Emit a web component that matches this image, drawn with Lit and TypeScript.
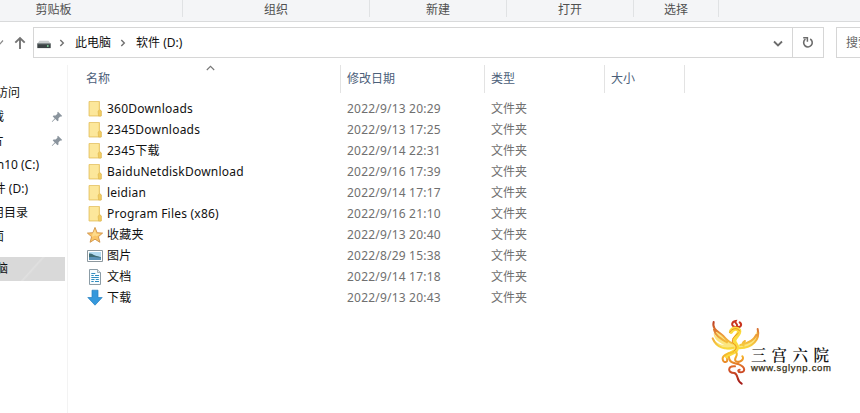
import { LitElement, html, css, svg, nothing } from "lit";
import { customElement } from "lit/decorators.js";
import { styleMap } from "lit/directives/style-map.js";

const icons = {
  folder: svg`<svg width="16" height="18" viewBox="0 0 16 18"><path d="M2 1.5h10.5v8l1.5 1V16H2z" fill="#fbe08a" stroke="#e3c265" stroke-width=".8"/><path d="M3 2h8v13H3z" fill="#fce79b"/><path d="M11 11.2 12.6 9.8 14.3 11v5H11.6z" fill="#f2cd63" stroke="#dcb650" stroke-width=".6"/></svg>`,
  star: svg`<svg width="16" height="18" viewBox="0 0 16 18"><path d="M8 1.4 10.1 6.7 15.6 7.1 11.4 10.7 12.9 16.3 8 13.2 3.1 16.3 4.6 10.7.4 7.1 5.9 6.7z" fill="#fbc566" stroke="#cf9348" stroke-width=".9"/><path d="M8 3.5 9.2 7.7 13 8 9.8 10.3 8 9.5 5 11 5.5 8z" fill="#fddb8c"/></svg>`,
  picture: svg`<svg width="16" height="18" viewBox="0 0 16 18"><path d="M.5 3.5h15v11H.5z" fill="#fff" stroke="#8d989e"/><path d="M2 5h12v8H2z" fill="#b5dcf1"/><path d="M2 6.6c3-.5 4 1.2 6 2s4 .8 6 1.6V12H2z" fill="#3f6c74"/><path d="M2 10.2c3-.6 8 0 12 .4V13H2z" fill="#5b93b8"/></svg>`,
  doc: svg`<svg width="16" height="18" viewBox="0 0 16 18"><path d="M2.5 1.5h8l3 3v12h-11z" fill="#f8fcfe" stroke="#8b9ca6"/><path d="M10.5 1.5v3h3" fill="#dce7ed" stroke="#8b9ca6" stroke-width=".8"/><path d="M4.3 5.5h4M4.3 7.5h2.4M8 7.5h4M4.3 9.5h7.5M4.3 11.5h3.2M8.8 11.5h3M4.3 13.5h2.4M8 13.5h4" stroke="#2f8cc0" stroke-width="1.2"/></svg>`,
  down: svg`<svg width="16" height="18" viewBox="0 0 16 18"><path d="M5 1.2h6v7.3h4.2L8 16.2.8 8.5H5z" fill="#3598dc" stroke="#2580c0" stroke-width=".7"/></svg>`,
};

type IconName = keyof typeof icons;

const files: [IconName, string, string][] = [
  ["folder", "360Downloads", "2022/9/13 20:29"],
  ["folder", "2345Downloads", "2022/9/13 17:25"],
  ["folder", "2345下载", "2022/9/14 22:31"],
  ["folder", "BaiduNetdiskDownload", "2022/9/16 17:39"],
  ["folder", "leidian", "2022/9/14 17:17"],
  ["folder", "Program Files (x86)", "2022/9/16 21:10"],
  ["star", "收藏夹", "2022/9/13 20:40"],
  ["picture", "图片", "2022/8/29 15:38"],
  ["doc", "文档", "2022/9/14 17:18"],
  ["down", "下载", "2022/9/13 20:43"],
];

// label, right edge of the label, pinned
const places: [string, number, boolean][] = [
  ["快速访问", 20, false],
  ["下载", 4, true],
  ["图片", 4, true],
  ["Win10 (C:)", 39, false],
  ["软件 (D:)", 28, false],
  ["常用目录", 28, false],
  ["桌面", 4, false],
];

const pin = svg`<svg class="pin" width="12" height="12" viewBox="0 0 12 12"><path d="M7 .8 11.2 5 10 5.7 9.2 5.5 7.4 7.4 7.5 9.4 6.5 10.2 4.3 8 1.2 11 .8 10.6 3.7 7.4 1.7 5.3 2.6 4.4 4.6 4.5 6.5 2.7 6.2 1.8z" fill="#8a949d"/></svg>`;
const chevron = svg`<svg width="6" height="8" viewBox="0 0 6 8"><path d="M1.3 1 4.3 4 1.3 7" fill="none" stroke="#707070" stroke-width="1.4"/></svg>`;

@customElement("app-root")
export class AppRoot extends LitElement {
  static styles = css`
    :host {
      display: flex;
      flex-direction: column;
      position: relative;
      width: 860px;
      height: 413px;
      overflow: hidden;
      background: #fff;
      color: #111;
      font: 12px/20px "Noto Sans", "Noto Sans CJK SC", sans-serif;
      white-space: nowrap;
    }
    svg { display: block; flex: none; }
    .ribbon {
      display: flex;
      flex: none;
      height: 21px;
      background: #f4f5f7;
      border-bottom: 1px solid #d9dadb;
      color: #505050;
    }
    .group {
      box-sizing: border-box;
      height: 17px;
      line-height: 19px;
      text-align: center;
      border-right: 1px solid #e0e2e4;
    }
    .g1 { width: 258px; margin-left: -75px; }
    .g2 { width: 187px; }
    .g3 { width: 137px; }
    .g4 { width: 127px; }
    .g5 { width: 85px; }
    .bar { display: flex; flex: none; height: 31px; margin-top: 5px; }
    .nav { display: flex; flex: none; width: 33px; align-items: center; }
    .nav .up { margin-left: 8px; }
    .box {
      box-sizing: border-box;
      display: flex;
      flex: none;
      align-items: center;
      border: 1px solid #d6d6d6;
    }
    .address { width: 760px; padding-left: 3px; }
    .address .disk { margin-right: 8px; margin-top: 4px; }
    .address .crumb { margin: 0 9px 0 10px; line-height: 28px; }
    .address .more { margin: 2px 9px 0 auto; }
    .refresh { width: 31px; border-left: 0; justify-content: center; }
    .search { width: 40px; margin-left: 12px; padding-left: 9px; color: #666; overflow: hidden; }
    .main { display: flex; flex: 1; min-height: 0; }
    .side {
      box-sizing: border-box;
      width: 68px;
      margin-top: 7px;
      padding-top: 16px;
      border-right: 1px solid #f3f3f3;
    }
    .place { display: flex; height: 24px; align-items: center; }
    .label { display: flex; flex: none; justify-content: flex-end; }
    .pin { margin-left: 47px; }
    .current { margin-top: 8px; width: 65px; background: linear-gradient(132deg, #d9d9d9 48%, #e0e0e0 50%, #d9d9d9 53%); }
    .list { flex: 1; }
    .head, .row { display: grid; grid-template-columns: 273px 144px 120px 80px; }
    .head {
      position: relative;
      height: 28px;
      margin-top: 7px;
      color: #4c607a;
      line-height: 28px;
    }
    .head span { border-right: 1px solid #e3e3e3; padding-left: 6px; }
    .head .first { padding-left: 18px; }
    .sort { position: absolute; left: 138px; top: 0; }
    .rows { margin-top: 5px; }
    .row { height: 21px; line-height: 21px; color: #707070; }
    .row > span { padding-left: 6px; }
    .row .name { display: flex; align-items: center; gap: 4px; padding-left: 19px; color: #111; }
    .name b { font-weight: 400; letter-spacing: 0.22px; }
    .date { letter-spacing: 0.2px; }
    .logo { position: absolute; left: 708px; top: 315px; }
    .brand { font: 600 15.5px "Noto Serif CJK SC", "Noto Sans CJK SC", serif; }
    .site { font: 9.5px "Liberation Sans", sans-serif; }
  `;

  render() {
    return html`
      <div class="ribbon">
        ${["剪贴板", "组织", "新建", "打开", "选择"].map(
          (t, i) => html`<div class="group g${i + 1}">${t}</div>`
        )}
      </div>
      <div class="bar">
        <div class="nav">
          <svg width="5" height="8" viewBox="0 0 5 8"><path d="M-3 1.5 0 4.8 3 1.5" fill="none" stroke="#888" stroke-width="1.2"/></svg>
          <svg class="up" width="14" height="14" viewBox="0 0 14 14"><path d="M7 13V2M2.3 6.6 7 2l4.7 4.6" fill="none" stroke="#747474" stroke-width="1.9"/></svg>
        </div>
        <div class="box address">
          <svg class="disk" width="14" height="9" viewBox="0 0 14 9"><path d="M2.5.7h9L14 4H0z" fill="#c9cccd"/><path d="M.3 3.8h13.4v4.3H.3z" fill="#3b4244"/><path d="M.3 3.8h13.4" stroke="#777f80"/><circle cx="10.8" cy="6" r=".9" fill="#7fd49b"/></svg>
          ${chevron}<span class="crumb">此电脑</span>${chevron}<span class="crumb">软件 (D:)</span>
          <svg class="more" width="10" height="8" viewBox="0 0 10 8"><path d="M1 1.5 5 5.5 9 1.5" fill="none" stroke="#6c6c6c" stroke-width="1.8"/></svg>
        </div>
        <div class="box refresh">
          <svg width="12" height="13" viewBox="0 0 12 13"><path d="M8.2 3A4.3 4.3 0 1 1 3.4 3.2" fill="none" stroke="#6c6c6c" stroke-width="1.6"/><path d="M1.2 1.8h4.2v4" fill="none" stroke="#6c6c6c" stroke-width="1.5"/></svg>
        </div>
        <div class="box search">搜索</div>
      </div>
      <div class="main">
        <div class="side">
          ${places.map(
            ([t, w, p]) => html`<div class="place">
              <span class="label" style=${styleMap({ width: `${w}px` })}>${t}</span>${p ? pin : nothing}
            </div>`
          )}
          <div class="place current"><span class="label" style=${styleMap({ width: "8px" })}>此电脑</span></div>
        </div>
        <div class="list">
          <div class="head">
            <span class="first">名称</span><span>修改日期</span><span>类型</span><span>大小</span>
            <svg class="sort" width="9" height="6" viewBox="0 0 9 6"><path d="M.8 5 4.5 1.3 8.2 5" fill="none" stroke="#777" stroke-width="1.1"/></svg>
          </div>
          <div class="rows">
            ${files.map(
              ([icon, name, date]) => html`<div class="row">
                <span class="name">${icons[icon]}<b>${name}</b></span><span class="date">${date}</span><span>文件夹</span>
              </div>`
            )}
          </div>
        </div>
      </div>
      <svg class="logo" width="130" height="72" viewBox="0 0 130 72">
        <defs>
          <linearGradient id="wing" gradientUnits="userSpaceOnUse" x1="0" y1="22" x2="0" y2="110">
            <stop offset="0" stop-color="#b8321f"/><stop offset=".5" stop-color="#ec9a3a"/><stop offset="1" stop-color="#fbdf3c"/>
          </linearGradient>
          <linearGradient id="tail" gradientUnits="userSpaceOnUse" x1="0" y1="105" x2="0" y2="208">
            <stop offset="0" stop-color="#fbd92e"/><stop offset=".3" stop-color="#f2a62a"/><stop offset=".6" stop-color="#d85a2a"/><stop offset="1" stop-color="#a51c18"/>
          </linearGradient>
        </defs>
        <g transform="translate(-3 -2) scale(.3333)" fill="none" stroke-linecap="round">
          <path d="M26 27C22 50 44 56 56 70C66 80 74 90 90 92L88 108C72 114 38 108 24 76C34 90 46 96 58 96C40 88 26 78 26 60C32 70 42 76 50 78C36 66 18 48 26 27Z" fill="#fbe680"/>
          <path d="M158 48C164 78 150 104 102 108L100 96C126 94 148 80 158 48Z" fill="#fbe680"/>
          <path d="M26 27C20 50 42 56 54 68C64 80 74 90 86 92M27 50C30 68 46 76 66 88M23 76C34 104 60 110 86 104" stroke="url(#wing)" stroke-width="6"/>
          <path d="M158 48C166 80 144 104 104 106M154 66C146 84 124 92 106 96M120 84C112 88 110 96 116 98" stroke="url(#wing)" stroke-width="6"/>
          <path d="M92 42C76 40 80 26 92 24C88 32 98 30 96 38M96 40C108 46 112 34 104 28" stroke="#c9341f" stroke-width="6"/>
          <path d="M78 56C82 46 96 44 102 52C106 62 92 70 88 80C84 92 102 96 94 110C90 120 72 120 66 130" stroke="#fbdc3e" stroke-width="13"/>
          <path d="M74 58C80 46 98 42 104 54M100 60C90 70 80 74 82 88M84 90C98 98 96 110 84 116" stroke="#ea8f23" stroke-width="3"/>
          <path d="M84 118C68 120 48 128 54 142C58 152 70 146 66 138M92 116C104 126 84 136 92 144C104 152 120 138 112 130M72 132C72 150 88 150 102 154C122 162 122 178 106 178C98 178 98 170 104 170M90 160C68 158 66 180 88 180C102 184 92 202 110 212" stroke="url(#tail)" stroke-width="6"/>
        </g>
        <g class="brand" fill="#161616"><text x="43" y="46">三</text><text x="63.5" y="46">宫</text><text x="84.5" y="46">六</text><text x="105.5" y="46">院</text></g>
        <text class="site" x="43" y="56" textLength="80" lengthAdjust="spacing" fill="#332e12" stroke="#332e12" stroke-width=".25">www.sglynp.com</text>
      </svg>
    `;
  }
}
